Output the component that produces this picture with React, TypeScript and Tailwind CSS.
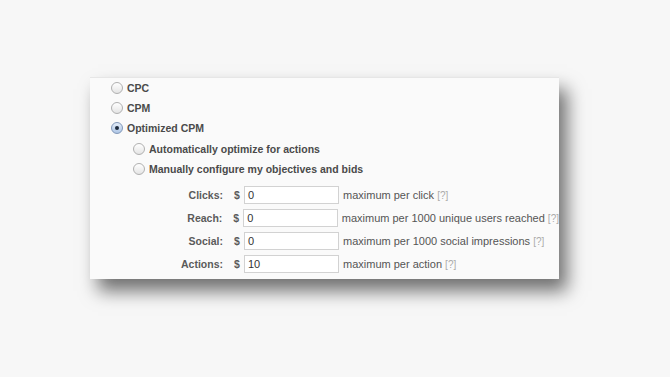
import React from 'react';

const Radio = ({ checked }: { checked?: boolean }) => (
  <span
    className={`flex h-[12px] w-[12px] shrink-0 items-center justify-center rounded-full border ${
      checked
        ? 'border-[#8197b8] bg-gradient-to-b from-[#e3ecf8] to-[#aec6e6]'
        : 'border-[#b0b0b0] bg-gradient-to-b from-[#ffffff] to-[#e4e4e4]'
    }`}
  >
    {checked && <span className="h-[4px] w-[4px] rounded-full bg-[#1d2a3d]" />}
  </span>
);

const RadioRow = ({ label, checked, indent }: { label: string; checked?: boolean; indent?: boolean }) => (
  <div className={`flex h-[20px] items-center gap-[4px] ${indent ? 'pl-[22px]' : ''}`}>
    <Radio checked={checked} />
    <span className="text-[10.5px] font-bold text-[#4a4a4a]">{label}</span>
  </div>
);

const App = () => {
  const bids = [
    { label: 'Clicks:', value: '0', note: 'maximum per click' },
    { label: 'Reach:', value: '0', note: 'maximum per 1000 unique users reached' },
    { label: 'Social:', value: '0', note: 'maximum per 1000 social impressions' },
    { label: 'Actions:', value: '10', note: 'maximum per action' },
  ];

  return (
    <div
      className="h-[377px] w-[670px] overflow-hidden bg-[#f7f7f7] pl-[90px] pt-[77px] text-[11px] leading-none"
      style={{ fontFamily: '"Liberation Sans", Arial, sans-serif' }}
    >
      <div className="h-[202px] w-[469px] border-t border-[#e6e6e6] bg-[#fafafa] pl-[21px] shadow-[8px_12px_17px_rgba(0,0,0,0.55)]">
        <RadioRow label="CPC" />
        <RadioRow label="CPM" />
        <RadioRow label="Optimized CPM" checked />
        <div className="mt-px">
          <RadioRow label="Automatically optimize for actions" indent />
          <RadioRow label="Manually configure my objectives and bids" indent />
        </div>
        <div className="mt-[7px] flex flex-col gap-[5px]">
          {bids.map((b) => (
            <div key={b.label} className="flex h-[18px] items-center whitespace-nowrap">
              <span className="w-[112px] text-right text-[10.5px] font-bold text-[#5a5a5a]">{b.label}</span>
              <span className="ml-[11px] w-[10px] text-[10.5px] font-bold text-[#5a5a5a]">$</span>
              <div className="flex h-[18px] w-[95px] items-center border border-[#d2d2d2] bg-white pl-[3px] text-[11px] text-[#333]">
                {b.value}
              </div>
              <span className="ml-[4px] text-[#555]">
                {b.note} <span className="text-[10px] text-[#aaa]">[?]</span>
              </span>
            </div>
          ))}
        </div>
      </div>
    </div>
  );
};

export default App;
